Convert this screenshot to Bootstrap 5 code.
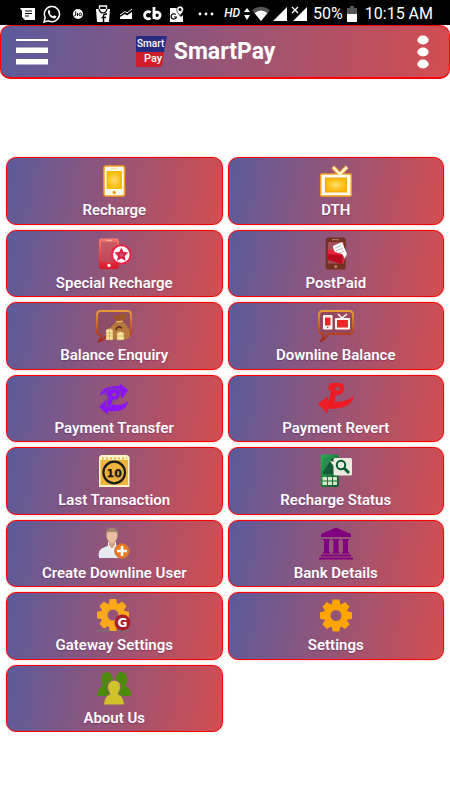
<!DOCTYPE html>
<html lang="en">
<head>
<meta charset="utf-8">
<meta name="viewport" content="width=device-width, initial-scale=1">
<title>SmartPay</title>
<link href="https://cdn.jsdelivr.net/npm/bootstrap@5.3.0/dist/css/bootstrap.min.css" rel="stylesheet">
<style>
body{font-family:Roboto,"Liberation Sans",sans-serif;background:#fff}
svg{display:block;flex:none}
.status{background:#000;color:#fff;height:25px;padding:2px 17px 0 20px;font-size:16px;line-height:23px;white-space:nowrap}
.status .apps{gap:7px}
.status .hd{font-size:12px;font-style:italic;font-weight:500;margin-right:3px}
.panel{border:1px solid #f00;background:linear-gradient(100deg,#5b5b9c,#d34d50);color:#fff}
.topbar{height:54px;border-radius:10px;padding:0 15px;border-width:1px 1px 2px}
.brand{font-size:23px;line-height:32px;font-weight:700;gap:6px;color:#fff;margin-left:21%}
.plain{border:0;background:none;padding:0}
.menu{display:grid;grid-template-columns:repeat(2,minmax(0,1fr));grid-auto-rows:1fr;gap:5px;min-height:575px;margin-top:78px;padding:0 6px}
.tile{border-radius:10px;padding:6px 4px 2px;box-shadow:0 0 2px rgba(255,0,0,.35);font-size:15px;line-height:20px;font-weight:600;text-decoration:none;gap:2px;text-shadow:0 1px 1px rgba(70,0,80,.35)}
</style>
<script src="https://cdn.jsdelivr.net/npm/bootstrap@5.3.0/dist/js/bootstrap.bundle.min.js"></script>
</head>
<body>
<svg width="0" height="0" class="position-absolute" aria-hidden="true">
<defs>
<radialGradient id="gold"><stop stop-color="#ffdc70"/><stop offset="1" stop-color="#fbb900"/></radialGradient>
<linearGradient id="red" x2="0" y2="1"><stop stop-color="#f77a70"/><stop offset="1" stop-color="#d9182c"/></linearGradient>
<linearGradient id="frame" x2="0" y2="1"><stop stop-color="#e99a38"/><stop offset="1" stop-color="#a32618"/></linearGradient>
<linearGradient id="green" x2="1" y2="1"><stop stop-color="#2fae55"/><stop offset="1" stop-color="#07542b"/></linearGradient>
<mask id="hole"><rect x="-20" y="-20" width="40" height="40" fill="#fff"/><circle r="5.5" fill="#000"/></mask>
<path id="tooth" d="M-4.6-10L-3.2-16H3.2L4.6-10Z"/>
<g id="gear" mask="url(#hole)"><circle r="12"/><use href="#tooth"/><use href="#tooth" transform="rotate(45)"/><use href="#tooth" transform="rotate(90)"/><use href="#tooth" transform="rotate(135)"/><use href="#tooth" transform="rotate(180)"/><use href="#tooth" transform="rotate(225)"/><use href="#tooth" transform="rotate(270)"/><use href="#tooth" transform="rotate(315)"/></g>
</defs>
</svg>

<div class="status d-flex align-items-center justify-content-between">
  <div class="apps d-flex align-items-center" aria-hidden="true">
    <svg width="16" height="16" viewBox="0 0 16 16"><path d="M0 2H15V14H5L2 11V5Z" fill="#fff"/><path d="M5 5H12M5 7.500H12M5 10H9" stroke="#000" stroke-width="1.200"/></svg>
    <svg width="18" height="18" viewBox="0 0 18 18"><path d="M1 17L2.200 12.500A7.600 7.600 0 1 1 5.500 15.800Z" fill="none" stroke="#fff" stroke-width="1.500"/><path d="M6 4.500L7.500 7L6.700 8.200Q8 10.700 10 11.300L11.200 10.200L13.500 11.500Q13 13.500 11 13.500Q6 12.500 4.800 7Q5 5 6 4.500Z" fill="#fff"/></svg>
    <svg width="20" height="18" viewBox="0 0 18 18"><circle cx="9" cy="9" r="5" fill="#fff"/><path d="M6.700 6.500V10Q6.500 11 5.500 10.500M8.500 8V11" fill="none" stroke="#000"/><circle cx="11.300" cy="9.400" r="1.300" fill="none" stroke="#000"/></svg>
    <svg width="16" height="18" viewBox="0 0 16 18"><path d="M1 4H15L14 17H2Z" fill="#fff"/><path d="M4.500 4V1H11.500V4" fill="none" stroke="#fff" stroke-width="1.300"/><path d="M4 4Q5 8 8 8T12 4" fill="none" stroke="#000" stroke-width="1.200"/><path d="M12 9Q8.500 8.500 8.500 11.500V17M6.500 12.500H11" fill="none" stroke="#000" stroke-width="1.500"/></svg>
    <svg width="18" height="16" viewBox="2 0 18 16"><path d="M4 13V11L9 8L11 9.500L16 6V13Z" fill="#fff"/><path d="M4 9L9 5.500L11 7L16 3" fill="none" stroke="#fff"/></svg>
    <svg width="19" height="16" viewBox="0 0 19 16" fill="none" stroke="#fff" stroke-width="2.800"><path d="M7.500 6.500A3.600 3.600 0 1 0 7.500 12"/><path d="M11 1V13"/><circle cx="14" cy="9.300" r="3.100"/></svg>
    <svg width="16" height="18" viewBox="0 0 16 18"><path d="M1 3H8Q8 8 12 12L14 10V17H1Z" fill="#fff"/><path d="M11 1A3.600 3.600 0 0 1 14.500 5Q14 7.500 11 10.500Q7.500 7 7.500 4.500Q8 1 11 1Z" fill="#fff" stroke="#000" stroke-width=".6"/><circle cx="11" cy="4.500" r="1.500"/><path d="M6.700 9.500A2.700 2.700 0 1 0 7.500 12H5" fill="none" stroke="#000" stroke-width="1.200"/></svg>
    <svg width="26" height="18" viewBox="0 0 26 18" fill="#fff"><circle cx="8" cy="9" r="1.400"/><circle cx="14" cy="9" r="1.400"/><circle cx="20" cy="9" r="1.400"/></svg>
  </div>
  <div class="d-flex align-items-center">
    <span class="hd">HD</span>
    <svg width="70" height="18" viewBox="0 0 70 18" fill="#fff" aria-hidden="true"><path d="M1 7L4 3L7 7ZM1 10L4 15L7 10Z"/><path d="M9 5Q18-1.500 27 5L18 16Z" fill="#555"/><path d="M11.500 8Q18 3 24.500 8L18 16Z"/><path d="M30 16L44 2V16ZM50 16L64 2V16Z"/><path d="M49 2L55 8M55 2L49 8" stroke="#000" stroke-width="3.500"/><path d="M49 2L55 8M55 2L49 8" stroke="#fff" stroke-width="1.400"/></svg>
    <span>50%</span>
    <svg class="ms-1 me-2" width="10" height="18" viewBox="0 0 10 18" aria-hidden="true"><path d="M0 3H3V1H7V3H10V9H0Z" fill="#555"/><path d="M0 9H10V17H0Z" fill="#fff"/></svg>
    <span>10:15 AM</span>
  </div>
</div>

<header class="panel topbar d-flex align-items-center">
  <button class="plain" type="button" aria-label="Open menu"><svg width="32" height="26" viewBox="0 0 32 26" fill="#fff"><path d="M0 0H32V2H0ZM0 8.500H32V14H0ZM0 20H32V25.500H0Z"/></svg></button>
  <div class="brand d-flex align-items-center">
    <svg width="32" height="32" viewBox="0 0 32 32" role="img" aria-label="Smart Pay"><path d="M0 1Q0 0 1 0H31L28 16H0Z" fill="#292a83"/><path d="M0 16H28L26 29Q25.500 31 24 31H2Q0 31 0 29Z" fill="#cf1d29"/><g fill="#fff" font-family="Roboto,sans-serif" font-size="10" font-weight="500"><text x="1" y="11">Smart</text><text x="8" y="26" font-size="11">Pay</text></g></svg>
    <span>SmartPay</span>
  </div>
  <button class="plain ms-auto" type="button" aria-label="More options"><svg width="22" height="34" viewBox="0 0 22 34" fill="#fff"><ellipse cx="11" cy="5" rx="5.700" ry="4.400"/><ellipse cx="11" cy="17" rx="5.700" ry="4.400"/><ellipse cx="11" cy="29" rx="5.700" ry="4.400"/></svg></button>
</header>

<main class="menu">
  <a href="#" class="panel tile d-flex flex-column align-items-center">
    <svg width="36" height="34" viewBox="0 0 36 34" aria-hidden="true"><rect x="8" y="2" width="20.500" height="30" rx="2" fill="#fffaf0" stroke="#f5a01d" stroke-width="1.500"/><rect x="10.500" y="7" width="15.500" height="18" fill="url(#gold)"/><rect x="15" y="3.700" width="6" height="1.500" fill="#f7dfb3"/><circle cx="18.200" cy="28.500" r="1.700" fill="#f5a01d"/></svg>Recharge</a>
  <a href="#" class="panel tile d-flex flex-column align-items-center">
    <svg width="36" height="34" viewBox="0 0 36 34" aria-hidden="true"><path d="M15 3L21 9.500M29 3L21 11" stroke="#f5a01d" stroke-width="4.500"/><rect x="2.700" y="10" width="30.500" height="22" rx="1" fill="#fffdf5" stroke="#f5a01d" stroke-width="1.500"/><path d="M15 3L22 10.500M29 3L21 11" stroke="#fff4cf" stroke-width="2.500"/><rect x="7.500" y="14" width="21" height="14" fill="url(#gold)" stroke="#f5a01d"/></svg>DTH</a>
  <a href="#" class="panel tile d-flex flex-column align-items-center">
    <svg width="36" height="34" viewBox="0 0 36 34" aria-hidden="true"><rect x="3" y="1.500" width="20" height="30.500" rx="2" fill="url(#red)"/><rect x="5" y="5" width="16" height="20" fill="#b15364" opacity=".65"/><path d="M10 3.300H16" stroke="#ffc0b8"/><circle cx="13" cy="28.500" r="1.700" fill="#fff0ed"/><circle cx="25.300" cy="17.500" r="10.300" fill="#ee2345"/><circle cx="25.300" cy="17.500" r="8.300" fill="#fff"/><path d="M25.300 10.500L27.400 15L32.300 15.600L28.700 19L29.600 23.800L25.300 21.400L21 23.800L21.900 19L18.300 15.600L23.200 15Z" fill="#e51e42"/><circle cx="25.300" cy="18" r="1.800" fill="#b95b6b"/></svg>Special Recharge</a>
  <a href="#" class="panel tile d-flex flex-column align-items-center">
    <svg width="36" height="34" viewBox="0 0 36 34" aria-hidden="true"><rect x="7.700" y=".5" width="20" height="32" rx="2.500" fill="#74301e"/><rect x="9.800" y="5" width="16" height="21.500" fill="#a64e5b"/><path d="M14 2.700H21" stroke="#c48772"/><circle cx="17.700" cy="29.500" r="1.600" fill="#b98469"/><path d="M15 9L24 5L29 17L26 23L17 22Z" fill="#fff"/><path d="M17 11L23 8.500M18 14L25 11M21 16L26 14" stroke="#bbb"/><path d="M10 13L15 12L17 15L24 17L27 22L24 27L10 23Z" fill="#e32638"/><path d="M10 17L25 18L24 27L10 23Z" fill="#b80d20"/></svg>PostPaid</a>
  <a href="#" class="panel tile d-flex flex-column align-items-center">
    <svg width="36" height="34" viewBox="0 0 36 34" aria-hidden="true"><path d="M5 2H31Q35 2 35 6V23Q35 27 31 27H10Q8 31 3 32Q6 28 5 26Q1 26 1 22V6Q1 2 5 2Z" fill="#8b4553" fill-opacity=".45" stroke="url(#frame)" stroke-width="2"/><path d="M17 6L22 7L26 4L31 7L27 12H20Z" fill="#9d5727"/><path d="M20 13H27Q35 19 34 28Q30 32 18 30Q11 26 14 19Z" fill="#b6783d"/><path d="M20 13L27 12" stroke="#f5d271"/><path d="M26 19Q21 16 20 21" fill="none" stroke="#593018" stroke-width="1.700"/><g fill="#f7e6a1" stroke="#b88b3d" stroke-width=".5"><path d="M10 21Q14 18 17 21V31H10ZM21 24Q24 21 28 24V31H21Z"/><path d="M10 24H17M10 27H17M21 27H28M13.500 20V31" fill="none"/></g></svg>Balance Enquiry</a>
  <a href="#" class="panel tile d-flex flex-column align-items-center">
    <svg width="36" height="34" viewBox="0 0 36 34" aria-hidden="true"><path d="M5 2H31Q35 2 35 6V21Q35 25 31 25H10Q8 30 3.500 31.500Q6 28 5 25Q1 25 1 21V6Q1 2 5 2Z" fill="#953e48" fill-opacity=".55" stroke="url(#frame)" stroke-width="2"/><rect x="5" y="6" width="9.500" height="14.500" rx="1" fill="#fff4f2"/><rect x="7" y="8.500" width="5.500" height="8" fill="#ea2828"/><circle cx="9.700" cy="18.500" r=".8" fill="#ea2828"/><path d="M20 5L24 9L29 5" fill="none" stroke="#fff4f2" stroke-width="1.600"/><rect x="17" y="9" width="15" height="11.500" rx="1" fill="#fff4f2"/><rect x="19" y="11" width="11" height="7.500" fill="#ea2828"/></svg>Downline Balance</a>
  <a href="#" class="panel tile d-flex flex-column align-items-center">
    <svg width="36" height="34" viewBox="0 0 36 34" aria-hidden="true"><g fill="#8b12fa"><path d="M4 14Q5 3 24 4L23 1L32 8L26 17L24 13Q10 8 4 14Z"/><path d="M32 19Q31 31 12 29L12 33L3 25L11 17L12 21Q25 26 32 19Z"/><path d="M12 7H20Q26 8 24 14Q22 19 17 18L15.500 24H10L12 14L9 13Z" stroke="#784a83" stroke-width="1.200"/></g><path d="M17 11H19Q21 12 19 14H16Z" fill="#8b527d"/></svg>Payment Transfer</a>
  <a href="#" class="panel tile d-flex flex-column align-items-center">
    <svg width="36" height="34" viewBox="0 0 36 34" aria-hidden="true"><g fill="#ed1c24"><path d="M0 22L10 14V19Q26 22 36 14Q34 27 10 27V32Z"/><path d="M12 1H22Q28 2 26 8Q24 14 18 13L17 20H10L13 9L10 7Z"/></g><path d="M18 5H21Q23 6 21 8.500H17Z" fill="#985067"/><path d="M18 13L17 20Q21 20 22 17" fill="none" stroke="#985067" stroke-width=".8"/></svg>Payment Revert</a>
  <a href="#" class="panel tile d-flex flex-column align-items-center">
    <svg width="36" height="34" viewBox="0 0 36 34" aria-hidden="true"><path d="M3 3L5 1H31L33.500 3V33H3Z" fill="#fff2c6"/><rect x="4.500" y="6" width="27.500" height="25" fill="#eeb43b"/><path d="M6 4.500H31" stroke="#eeb43b" stroke-width="2" stroke-dasharray="2 2"/><circle cx="18.200" cy="18.500" r="10.800" fill="none" stroke="#171b19" stroke-width="2.200"/><text x="18.200" y="22.500" text-anchor="middle" font-family="'DejaVu Sans',sans-serif" font-size="11" font-weight="700" fill="#171b19">10</text></svg>Last Transaction</a>
  <a href="#" class="panel tile d-flex flex-column align-items-center">
    <svg width="36" height="34" viewBox="0 0 36 34" aria-hidden="true"><rect x="2.700" y=".5" width="18" height="32.500" rx="2" fill="url(#green)"/><rect x="5" y="4" width="13" height="16" fill="#135c36"/><path d="M5 4H14L5 18Z" fill="#3cab61" opacity=".6"/><path d="M4.500 23H9V26.500H4.500ZM10 23H14V26.500H10ZM15 23H19V26.500H15ZM4.500 27.500H9V31H4.500ZM10 27.500H14V31H10ZM15 27.500H19V31H15Z" fill="#d7e8c8"/><path d="M12 7L17 8V14Z" fill="#eef0e5"/><rect x="15.500" y="4" width="18.500" height="17.500" rx="1.500" fill="#eceadc"/><circle cx="23" cy="11" r="4.200" fill="none" stroke="#075c32" stroke-width="2"/><path d="M26 14L31 19" stroke="#075c32" stroke-width="3"/></svg>Recharge Status</a>
  <a href="#" class="panel tile d-flex flex-column align-items-center">
    <svg width="36" height="34" viewBox="0 0 36 34" aria-hidden="true"><path d="M3 31Q1 22 9 20L13 18H20L25 21Q30 24 29 31Z" fill="#e4eaf0"/><path d="M12 18L16 24L20 18V15H12Z" fill="#fff"/><path d="M13 14H19V18L16 22L13 18Z" fill="#d8a17d"/><ellipse cx="16" cy="8.500" rx="5.500" ry="7.500" fill="#e9be9e"/><path d="M10 8Q9 1 16 1T22 8L20 5H12Z" fill="#a08573"/><circle cx="26" cy="24" r="7.300" fill="#ef7922" stroke="#c9743d"/><path d="M26 19V29M21 24H31" stroke="#fff" stroke-width="2.500"/></svg>Create Downline User</a>
  <a href="#" class="panel tile d-flex flex-column align-items-center">
    <svg width="36" height="34" viewBox="0 0 36 34" aria-hidden="true" fill="#800080"><path d="M18 .5L33 7V10H3V7ZM5 12H12V13.500H11V25H12V26.500H5V25H6V13.500H5ZM14.500 12H21.500V13.500H20.500V25H21.500V26.500H14.500V25H15.500V13.500H14.500ZM24 12H31V13.500H30V25H31V26.500H24V25H25V13.500H24ZM3 27.500H33V29.500H3ZM1 30.500H35V32.500H1Z"/></svg>Bank Details</a>
  <a href="#" class="panel tile d-flex flex-column align-items-center">
    <svg width="36" height="34" viewBox="0 0 36 34" aria-hidden="true"><path d="M1 31.500H33" stroke="#77717b" stroke-width="1.500"/><use href="#gear" transform="translate(17 16)" fill="#f9a91b"/><circle cx="26.500" cy="23.500" r="8" fill="#ad1e29"/><text x="26.500" y="28" text-anchor="middle" font-family="'DejaVu Sans',sans-serif" font-size="12" font-weight="700" fill="#fff">G</text></svg>Gateway Settings</a>
  <a href="#" class="panel tile d-flex flex-column align-items-center">
    <svg width="36" height="34" viewBox="0 0 36 34" aria-hidden="true"><use href="#gear" transform="translate(18 16.500)" fill="#ffa500"/></svg>Settings</a>
  <a href="#" class="panel tile d-flex flex-column align-items-center">
    <svg width="36" height="34" viewBox="0 0 36 34" aria-hidden="true"><g fill="#4d8a0b"><ellipse cx="11" cy="7.500" rx="6" ry="7.500"/><ellipse cx="25.500" cy="7.500" rx="6" ry="7.500"/><path d="M1 24Q1 16 8 13H28Q35 16 35.500 24Z"/></g><path d="M7.500 33Q8 24 14 22Q10 16 12.500 11Q18 5 24 11Q26 17 22 22Q28 24 28.500 33Z" fill="#d0c32a" stroke="#935774" stroke-width="1"/></svg>About Us</a>
</main>
</body>
</html>
